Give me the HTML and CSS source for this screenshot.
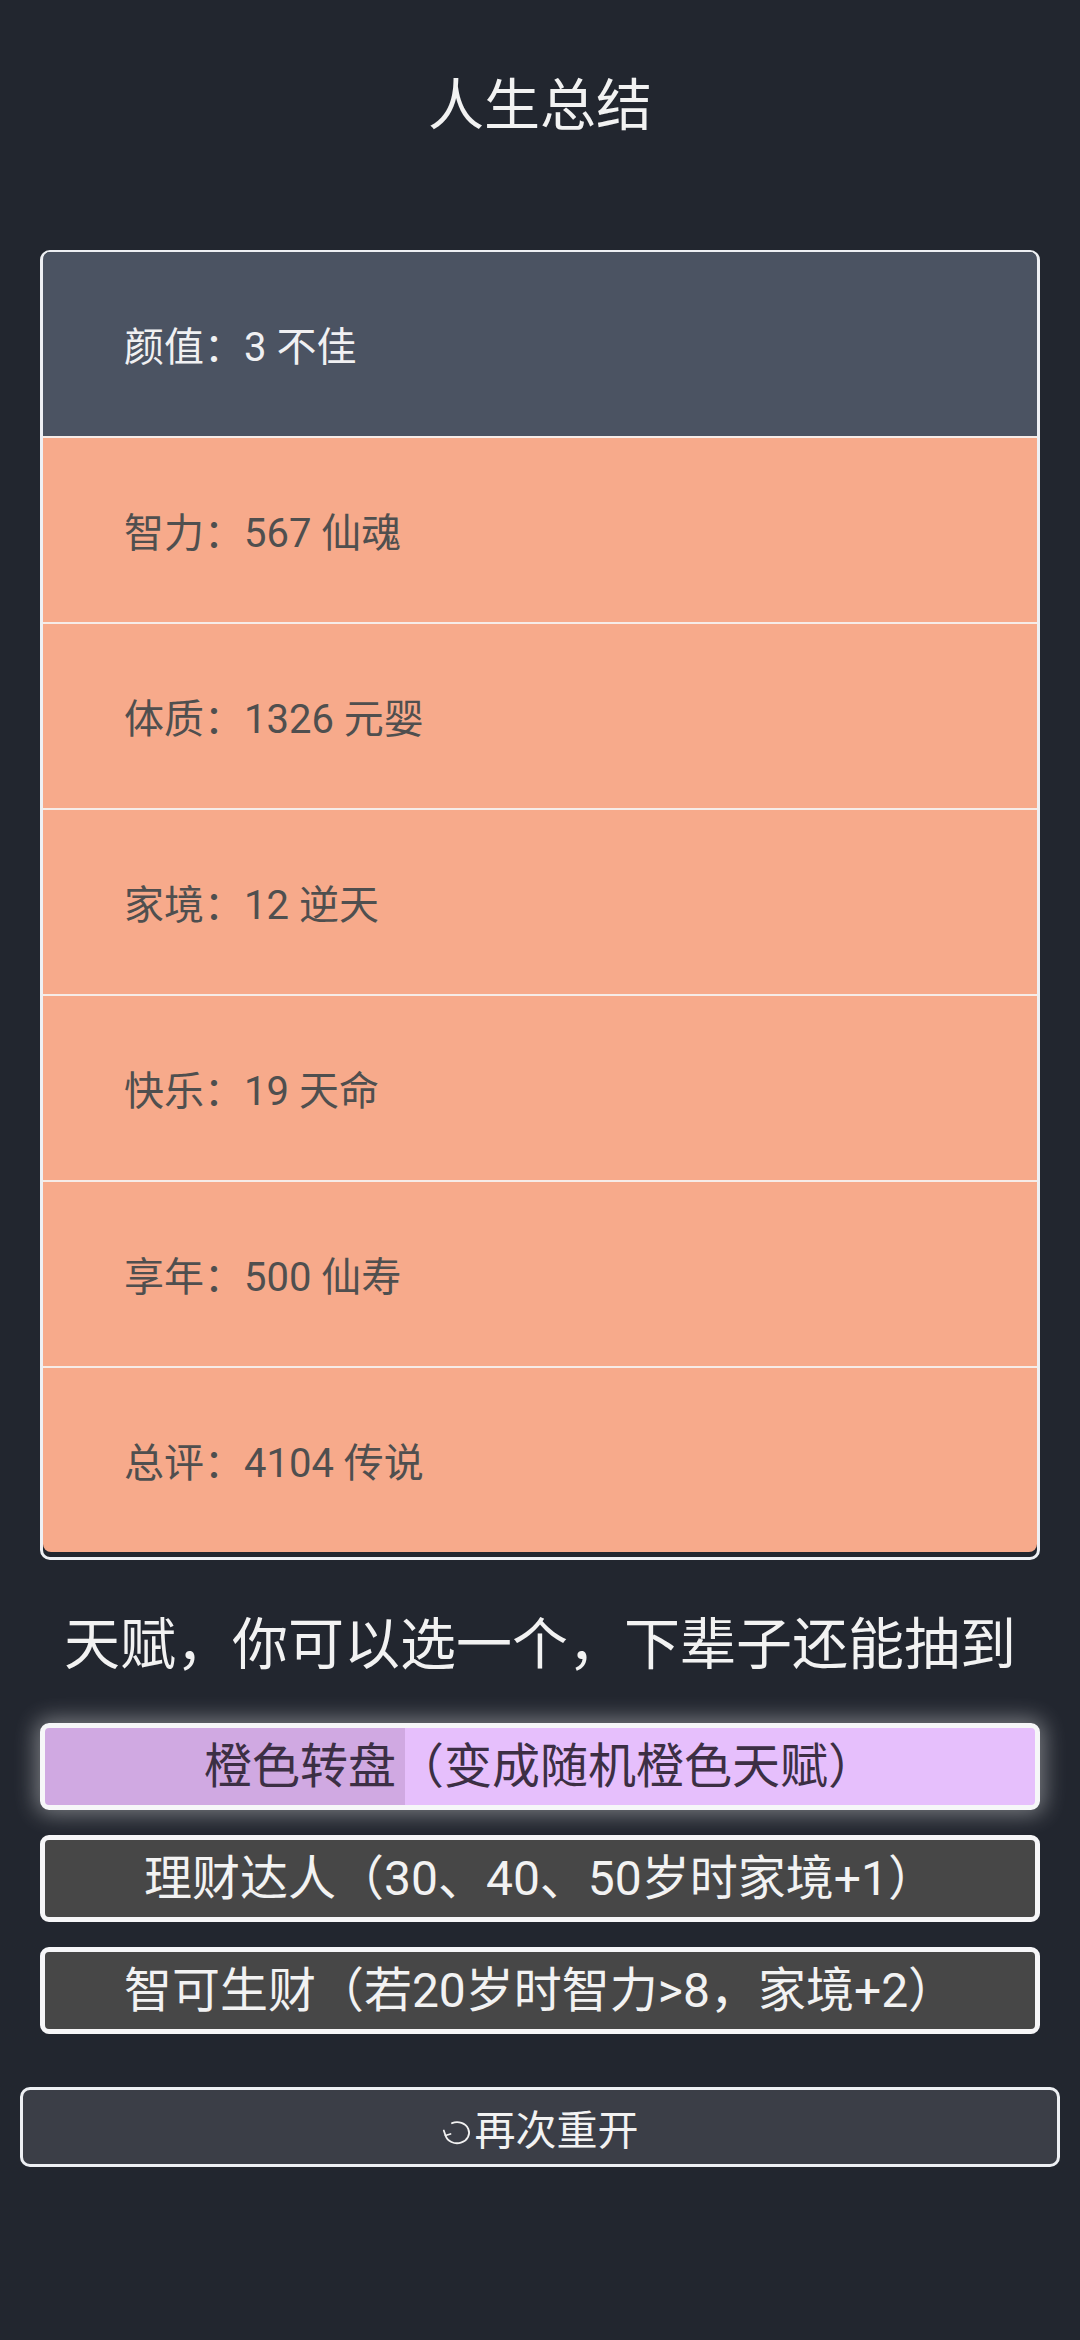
FILE: index.html
```html
<!DOCTYPE html>
<html lang="zh-CN">
<head>
    <meta charset="UTF-8" />
    <meta name="viewport" content="width=device-width, initial-scale=1" />
    <title>人生总结</title>
    <link rel="stylesheet" href="styles.css">
</head>
<body>
<div class="page">
    <h1 class="title">人生总结</h1>

    <ul class="summary">
        <li class="grade-low">颜值：3 不佳</li>
        <li class="grade-top">智力：567 仙魂</li>
        <li class="grade-top">体质：1326 元婴</li>
        <li class="grade-top">家境：12 逆天</li>
        <li class="grade-top">快乐：19 天命</li>
        <li class="grade-top">享年：500 仙寿</li>
        <li class="grade-top">总评：4104 传说</li>
    </ul>

    <h2 class="talent-title">天赋，你可以选一个，下辈子还能抽到</h2>

    <div class="talents">
        <button class="talent selected">橙色转盘（变成随机橙色天赋）</button>
        <button class="talent">理财达人（30、40、50岁时家境+1）</button>
        <button class="talent">智可生财（若20岁时智力&gt;8，家境+2）</button>
    </div>

    <button class="restart">
        <svg class="restart-icon" viewBox="0 0 32 26" width="32" height="26" fill="none" stroke="#f2f2f2" stroke-width="1.8" stroke-linecap="round" stroke-linejoin="round">
            <path d="M10 3.2 A12 10.5 0 1 1 3.5 15.5" />
            <path d="M1.8 10.5 L3.5 15.5 L8.5 14" />
        </svg>再次重开
    </button>
</div>
</body>
</html>
```

FILE: styles.css
```css
:root {
    --bg-color: #22262f;
    --text-color: #f2f2f2;
    --line-color: #eef0f4;
    --row-low: #4b5362;
    --row-top: #f7aa8b;
}

body {
    margin: 0;
    background-color: var(--bg-color);
    color: var(--text-color);
    font-family: Roboto, "Noto Sans CJK SC", sans-serif;
}

.page {
    padding: 0 40px 100px;
    display: flex;
    flex-direction: column;
}

.title {
    margin: 66px 0 104px;
    font-size: 56px;
    font-weight: normal;
    line-height: 80px;
    text-align: center;
}

.summary {
    list-style: none;
    margin: 0;
    padding: 0 0 5px;
    border: 3px solid var(--line-color);
    border-top-width: 2px;
    border-radius: 10px;
    overflow: hidden;
    display: flex;
    flex-direction: column;
    gap: 2px;
    background-color: var(--bg-color);
}

.summary li {
    height: 184px;
    padding-left: 81px;
    display: flex;
    align-items: center;
    font-size: 40px;
    box-shadow: 0 2px 0 #f6ece8;
}

.summary li:last-child {
    box-shadow: none;
    border-radius: 0 0 8px 8px;
}

.grade-low {
    background-color: var(--row-low);
    color: #f0f0f2;
}

.grade-top {
    background-color: var(--row-top);
    color: #4f4f4f;
}

.talent-title {
    margin: 45px 0 38px;
    font-size: 56px;
    font-weight: normal;
    line-height: 80px;
    text-align: center;
}

.talents {
    display: flex;
    flex-direction: column;
    gap: 25px;
}

.talent {
    height: 87px;
    padding: 0;
    border: 5px solid #f6f6f8;
    border-radius: 9px;
    background-color: #474747;
    color: var(--text-color);
    font-family: inherit;
    font-size: 48px;
    line-height: 1;
    cursor: pointer;
}

.talent.selected {
    background: linear-gradient(to right, #d0a9e2 0 360px, #e6bffc 360px);
    color: #3c2f44;
    box-shadow: 0 0 22px 4px rgba(255, 255, 255, 0.4);
}

.restart {
    margin: 53px -20px 0;
    height: 80px;
    border: 3px solid var(--line-color);
    border-radius: 10px;
    background-color: #3b3e47;
    color: var(--text-color);
    font-family: inherit;
    font-size: 41px;
    display: flex;
    align-items: center;
    justify-content: center;
    cursor: pointer;
}

.restart-icon {
    margin-top: 12px;
    margin-right: 1px;
}
```
